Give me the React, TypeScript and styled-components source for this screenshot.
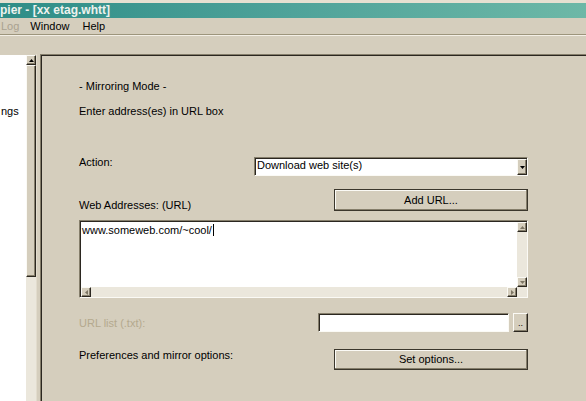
import React from 'react';
import styled, { createGlobalStyle, css } from 'styled-components';

const FACE = '#d5cebd';
const SHADOW = '#857e6b';
const DARK = '#2b2720';
const LIGHT = '#fbfaf5';
const TRACK = '#ebe7dc';

const GlobalStyle = createGlobalStyle`
  *, *::before, *::after {
    box-sizing: border-box;
  }

  html,
  body {
    margin: 0;
    padding: 0;
  }

  body {
    background: ${FACE};
    color: #000;
    font-family: 'Liberation Sans', Arial, sans-serif;
    font-size: 11px;
    line-height: 13px;
    overflow: hidden;
  }
`;

const raised = css`
  background: ${FACE};
  border: 1px solid;
  border-color: ${LIGHT} ${DARK} ${DARK} ${LIGHT};
  box-shadow: inset -1px -1px 0 ${SHADOW};
`;

const sunken = css`
  background: #fff;
  border: 1px solid;
  border-color: ${SHADOW} ${LIGHT} ${LIGHT} ${SHADOW};
  box-shadow: inset 1px 1px 0 ${DARK};
`;

const Window = styled.div`
  width: 586px;
  height: 401px;
  display: flex;
  flex-direction: column;
  overflow: hidden;
  background: ${FACE};
`;

const TitleBar = styled.div`
  height: 18px;
  border-top: 3px solid #e6e0d1;
  background: linear-gradient(to right, #2e8d87, #4fa39a 50%, #6db8a7);
  color: #eef2ee;
  font-size: 12px;
  font-weight: bold;
  line-height: 15px;
  white-space: nowrap;
`;

const MenuBar = styled.div`
  height: 17px;
  display: flex;
  gap: 11px;
  padding: 2px 0 0 1px;
  border-bottom: 1px solid #9d957c;
`;

const MenuItem = styled.span<{ $disabled?: boolean }>`
  color: ${(p) => (p.$disabled ? '#a9a190' : '#000')};

  &:last-child {
    margin-left: 2px;
  }
`;

const Toolbar = styled.div`
  height: 19px;
  border-top: 1px solid #f3efe6;
`;

const Body = styled.div`
  flex: 1;
  display: flex;
  min-height: 0;
`;

const TreePane = styled.div`
  width: 26px;
  margin-top: 1px;
  padding: 50px 0 0 1px;
  background: #fff;
  overflow: hidden;
  white-space: nowrap;
`;

const VScroll = styled.div`
  width: 10px;
  margin-top: 1px;
  display: flex;
  flex-direction: column;
  background: ${TRACK};
`;

const ScrollButton = styled.div`
  ${raised};
  width: 10px;
  height: 10px;
  flex: none;
  display: flex;
  align-items: center;
  justify-content: center;
`;

const ScrollThumb = styled.div<{ $size: number }>`
  ${raised};
  height: ${(p) => p.$size}px;
  flex: none;
`;

const Splitter = styled.div`
  width: 4px;
  border-left: 1px solid #e2dccd;
`;

const MainPane = styled.div`
  flex: 1;
  border-top: 1px solid ${SHADOW};
  border-left: 1px solid ${SHADOW};
  box-shadow: inset 1px 1px 0 ${DARK};
  padding: 25px 0 0 38px;
`;

const Form = styled.div`
  width: 449px;
  display: flex;
  flex-direction: column;
`;

const Text = styled.div<{ $gap?: number }>`
  margin-top: ${(p) => p.$gap || 0}px;
  white-space: nowrap;
`;

const Row = styled.div<{ $gap: number }>`
  margin-top: ${(p) => p.$gap}px;
  display: flex;
  justify-content: space-between;
  align-items: flex-start;
`;

const Label = styled.span<{ $offset?: number; $disabled?: boolean }>`
  margin-top: ${(p) => p.$offset || 0}px;
  color: ${(p) => (p.$disabled ? '#b4a98e' : '#000')};
  white-space: nowrap;
`;

const ComboBox = styled.div`
  ${sunken};
  width: 274px;
  height: 19px;
  margin-top: 1px;
  padding: 1px 0 0 1px;
  display: flex;
`;

const ComboValue = styled.span`
  flex: 1;
  padding-left: 1px;
`;

const DropButton = styled.div`
  ${raised};
  width: 10px;
  height: 16px;
  display: flex;
  align-items: center;
  justify-content: center;
`;

const PushButton = styled.div<{ $height: number }>`
  width: 194px;
  height: ${(p) => p.$height}px;
  background: ${FACE};
  border: 1px solid #3b372c;
  box-shadow: inset -1px -1px 0 ${SHADOW}, inset 1px 1px 0 ${LIGHT};
  display: flex;
  align-items: center;
  justify-content: center;
`;

const UrlBox = styled.div`
  ${sunken};
  margin-top: 8px;
  height: 78px;
  padding: 1px 0 0 1px;
  display: grid;
  grid-template-columns: 1fr 10px;
  grid-template-rows: 1fr 10px;
`;

const UrlText = styled.div`
  padding: 2px 0 0 1px;
  white-space: nowrap;
`;

const Caret = styled.span`
  display: inline-block;
  width: 1px;
  height: 12px;
  margin-left: 1px;
  vertical-align: -2px;
  background: #000;
`;

const ScrollBar = styled.div<{ $horizontal?: boolean }>`
  display: flex;
  flex-direction: ${(p) => (p.$horizontal ? 'row' : 'column')};
  justify-content: space-between;
  background: ${TRACK};
`;

const Corner = styled.div`
  background: ${TRACK};
`;

const FileGroup = styled.div`
  display: flex;
  gap: 4px;
`;

const FileInput = styled.div`
  ${sunken};
  width: 191px;
  height: 19px;
`;

const BrowseButton = styled.div`
  ${raised};
  width: 15px;
  height: 19px;
  display: flex;
  align-items: flex-end;
  justify-content: center;
  padding-bottom: 3px;
  font-size: 9px;
  line-height: 9px;
`;

type Dir = 'up' | 'down' | 'left' | 'right';

const arrowPoints: Record<Dir, string> = {
  up: '0,3 2.5,0 5,3',
  down: '0,0 5,0 2.5,3',
  left: '3,0 3,5 0,2.5',
  right: '0,0 3,2.5 0,5',
};

const Arrow = ({ dir, color = '#000' }: { dir: Dir; color?: string }) => {
  const flat = dir === 'up' || dir === 'down';
  return (
    <svg width={flat ? 5 : 3} height={flat ? 3 : 5} aria-hidden={true}>
      <polygon points={arrowPoints[dir]} fill={color} />
    </svg>
  );
};

const App = () => {
  return (
    <>
      <GlobalStyle />
      <Window>
        <TitleBar>pier - [xx etag.whtt]</TitleBar>
        <MenuBar>
          <MenuItem $disabled>Log</MenuItem>
          <MenuItem>Window</MenuItem>
          <MenuItem>Help</MenuItem>
        </MenuBar>
        <Toolbar />
        <Body>
          <TreePane>ngs</TreePane>
          <VScroll>
            <ScrollButton>
              <Arrow dir='up' />
            </ScrollButton>
            <ScrollThumb $size={212} />
          </VScroll>
          <Splitter />
          <MainPane>
            <Form>
              <Text>- Mirroring Mode -</Text>
              <Text $gap={12}>Enter address(es) in URL box</Text>

              <Row $gap={38}>
                <Label>Action:</Label>
                <ComboBox>
                  <ComboValue>Download web site(s)</ComboValue>
                  <DropButton>
                    <Arrow dir='down' />
                  </DropButton>
                </ComboBox>
              </Row>

              <Row $gap={13}>
                <Label $offset={10}>Web Addresses: (URL)</Label>
                <PushButton $height={22}>Add URL...</PushButton>
              </Row>

              <UrlBox>
                <UrlText>
                  www.someweb.com/~cool/
                  <Caret />
                </UrlText>
                <ScrollBar>
                  <ScrollButton>
                    <Arrow dir='up' color='#7d7664' />
                  </ScrollButton>
                  <ScrollButton>
                    <Arrow dir='down' color='#7d7664' />
                  </ScrollButton>
                </ScrollBar>
                <ScrollBar $horizontal>
                  <ScrollButton>
                    <Arrow dir='left' color='#7d7664' />
                  </ScrollButton>
                  <ScrollButton>
                    <Arrow dir='right' color='#7d7664' />
                  </ScrollButton>
                </ScrollBar>
                <Corner />
              </UrlBox>

              <Row $gap={15}>
                <Label $offset={4} $disabled>
                  URL list (.txt):
                </Label>
                <FileGroup>
                  <FileInput />
                  <BrowseButton>..</BrowseButton>
                </FileGroup>
              </Row>

              <Row $gap={17}>
                <Label>Preferences and mirror options:</Label>
                <PushButton $height={21}>Set options...</PushButton>
              </Row>
            </Form>
          </MainPane>
        </Body>
      </Window>
    </>
  );
};

export default App;
